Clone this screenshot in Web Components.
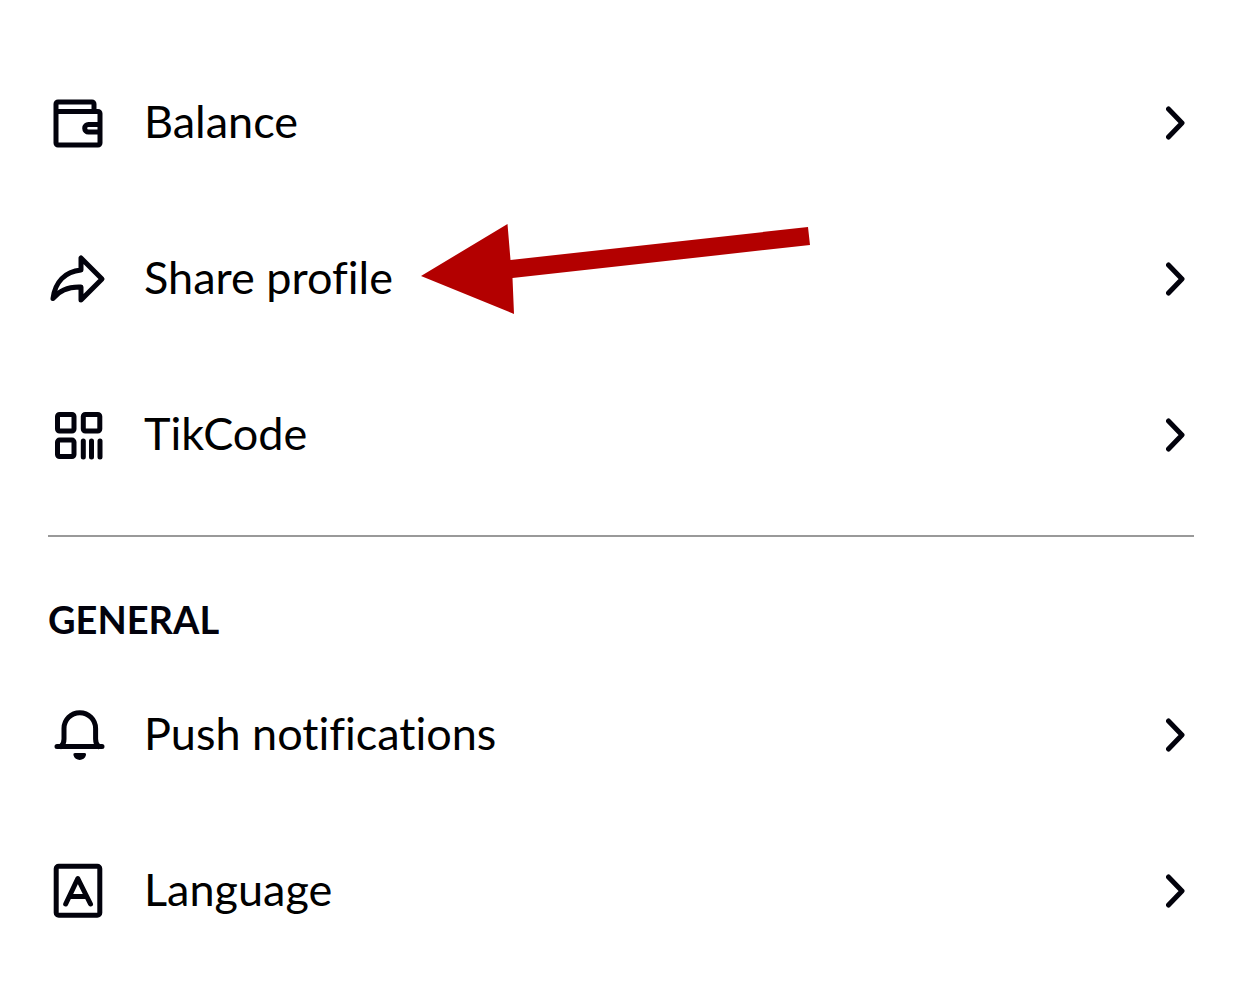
<!DOCTYPE html>
<html lang="en">
<head>
<meta charset="utf-8">
<title>Settings</title>
<style>
body { margin: 0; background: #fff; color: #000; font-family: Lato, "Open Sans", sans-serif; font-variant-ligatures: none; }
</style>
</head>
<body>
<settings-page>
  <settings-group>
    <settings-row icon="wallet">Balance</settings-row>
    <settings-row icon="share">Share profile<pointer-arrow slot="note"></pointer-arrow></settings-row>
    <settings-row icon="code">TikCode</settings-row>
  </settings-group>
  <settings-group heading="GENERAL">
    <settings-row icon="bell">Push notifications</settings-row>
    <settings-row icon="language">Language</settings-row>
  </settings-group>
</settings-page>
<script>
const icons = {
  wallet: '<path d="M6 16.5V9a2 2 0 0 1 2-2h34a2 2 0 0 1 2 2v7.500M6 16.500h42a2 2 0 0 1 2 2V48a2 2 0 0 1-2 2H8a2 2 0 0 1-2-2zM50 29.500H38.500a3.800 3.800 0 0 0 0 7.600H50"/>',
  share: '<path d="M31 7V19C15 20.500 5 31 3 47.500C9.500 39 19 35.500 31 36V49L52 28Z"/>',
  code: '<rect x="7.500" y="7.500" width="16.500" height="16.500" rx="2"/><rect x="33.300" y="7.500" width="16.500" height="16.500" rx="2"/><rect x="7.500" y="33.100" width="16.500" height="16.500" rx="2"/><path d="M33.300 34v16M41.500 34v16M50 34v16"/>',
  bell: '<path d="M7 39.500H52M11 39.500Q14 37 14 32V21.500a15.800 15.800 0 0 1 31.600 0V32Q45.600 37 48.500 39.500"/><path d="M25 46H34.500Q36.500 46 36 48C34.500 54.500 25 54.500 23.400 48Q23 46 25 46Z" fill="currentColor" stroke="none"/>',
  language: '<rect x="6.200" y="3.300" width="43.600" height="49" rx="2.500"/><path d="M15.700 41L27.800 15.500L40.500 41M20 33.500H36"/>'
};

class SettingsPage extends HTMLElement {
  constructor() {
    super();
    this.attachShadow({ mode: 'open' }).innerHTML = `
      <style>
        :host { display: block; }
        main { padding: 45px 47px 35px 48px; }
      </style>
      <main><slot></slot></main>`;
  }
}

class SettingsGroup extends HTMLElement {
  connectedCallback() {
    const heading = this.getAttribute('heading');
    this.attachShadow({ mode: 'open' }).innerHTML = `
      <style>
        :host { display: block; }
        :host([heading]) { margin-top: 22px; border-top: 2px solid #999; }
        h2 { margin: 0; padding: 58px 0 14px; font-size: 38px; line-height: 48px; font-weight: 700; color: #02020c; }
      </style>
      <section>${heading ? `<h2>${heading}</h2>` : ''}<slot></slot></section>`;
  }
}

class SettingsRow extends HTMLElement {
  connectedCallback() {
    this.attachShadow({ mode: 'open' }).innerHTML = `
      <style>
        :host { display: block; position: relative; }
        button { display: flex; align-items: center; width: 100%; height: 156px; margin: 0; padding: 0 0 0 2px;
          border: 0; background: none; color: inherit; font: inherit; font-size: 45px; line-height: 56px; font-variant-ligatures: none; text-align: left; cursor: pointer; }
        .label { flex: 1; padding: 0 0 4px 38px; }
        svg { flex: none; display: block; color: #02020c; fill: none; stroke: currentColor; stroke-width: 5; stroke-linecap: round; stroke-linejoin: round; }
      </style>
      <button type="button">
        <svg width="56" height="56" viewBox="0 0 56 56" aria-hidden="true">${icons[this.getAttribute('icon')]}</svg>
        <span class="label"><slot></slot></span>
        <svg width="28" height="56" viewBox="0 0 28 56" aria-hidden="true"><path d="M2.500 14L16 28L2.500 42"/></svg>
      </button>
      <slot name="note"></slot>`;
  }
}

class PointerArrow extends HTMLElement {
  constructor() {
    super();
    this.attachShadow({ mode: 'open' }).innerHTML = `
      <style>
        :host { display: block; position: absolute; left: 372px; top: 22px; pointer-events: none; }
        svg { display: block; }
      </style>
      <svg width="392" height="92" viewBox="0 0 392 92" aria-hidden="true">
        <path d="M1 53L87.500 1L90.500 37L388 4L390 22L92.500 55L94 91Z" fill="#b30000"/>
      </svg>`;
  }
}

customElements.define('settings-page', SettingsPage);
customElements.define('settings-group', SettingsGroup);
customElements.define('settings-row', SettingsRow);
customElements.define('pointer-arrow', PointerArrow);
</script>
</body>
</html>
